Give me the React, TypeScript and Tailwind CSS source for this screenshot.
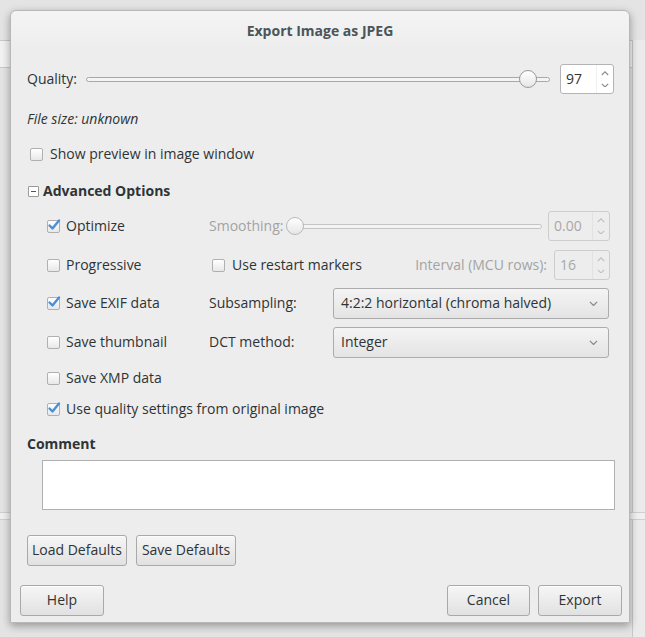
import React from 'react';

const font = { fontFamily: '"Open Sans", "Noto Sans", sans-serif' };

// Open Sans sits a little low next to GTK's font, lift labels by a pixel
function T({ children, className = '' }: { children: React.ReactNode; className?: string }) {
  return <span className={`pb-[2px] ${className}`}>{children}</span>;
}

function Check({ on }: { on?: boolean }) {
  return (
    <span className="relative inline-block w-[13px] h-[13px] shrink-0 rounded-[2px] border border-[#b0b0b0] bg-gradient-to-b from-white to-[#e8e8e8]">
      {on && (
        <svg viewBox="0 0 14 14" className="absolute -top-[3px] -right-[2px] w-[14px] h-[14px]">
          <path d="M2.5 7.5 L5.5 10.5 L12 2.5" fill="none" stroke="#4a90d9" strokeWidth="2.4" strokeLinecap="round" strokeLinejoin="round" />
        </svg>
      )}
    </span>
  );
}

function Chevron({ up, color = '#8a8a8a', size = 8 }: { up?: boolean; color?: string; size?: number }) {
  return (
    <svg viewBox="0 0 10 6" width={size} height={size * 0.6}>
      <path d={up ? 'M1 5 L5 1 L9 5' : 'M1 1 L5 5 L9 1'} fill="none" stroke={color} strokeWidth="1.4" />
    </svg>
  );
}

function Spin({ value, w, disabled }: { value: string; w: string; disabled?: boolean }) {
  return (
    <div className={`flex h-full ${w} rounded-[3px] border ${disabled ? 'border-[#cdcdcd] bg-[#ededed] text-[#a8a8a8]' : 'border-[#b4b4b4] bg-white text-[#2e3436]'}`}>
      <div className="flex-1 flex items-center pl-[5px]"><T>{value}</T></div>
      <div className={`w-[17px] flex flex-col items-center justify-center gap-[7px] border-l ${disabled ? 'border-[#e2e2e2]' : 'border-[#f0f0f0]'}`}>
        <Chevron up color={disabled ? '#c0c0c0' : '#8a8a8a'} />
        <Chevron color={disabled ? '#c0c0c0' : '#8a8a8a'} />
      </div>
    </div>
  );
}

function Slider({ pos, disabled }: { pos: string; disabled?: boolean }) {
  return (
    <div className="relative flex-1 h-[18px] flex items-center">
      <div className={`w-full h-[5px] rounded-full border ${disabled ? 'border-[#c4c4c4]' : 'border-[#a8a8a8]'} bg-[#f4f4f4]`} />
      <div
        className={`absolute top-0 w-[18px] h-[18px] -ml-[9px] rounded-full border ${disabled ? 'border-[#b8b8b8]' : 'border-[#9a9a9a]'} bg-gradient-to-b from-white to-[#e6e6e6]`}
        style={{ left: pos }}
      />
    </div>
  );
}

function Combo({ text }: { text: string }) {
  return (
    <div className="flex items-center h-full w-[276px] rounded-[3px] border border-[#acacac] bg-gradient-to-b from-[#f4f4f4] to-[#e4e4e4] pl-[7px] pr-[10px]">
      <T className="flex-1">{text}</T>
      <Chevron size={9} />
    </div>
  );
}

function Btn({ children, w }: { children: React.ReactNode; w: string }) {
  return (
    <button className={`h-full ${w} pb-[2px] rounded-[3px] border border-[#a9a9a9] bg-gradient-to-b from-[#f6f6f6] to-[#e1e1e1] text-[#2e3436] shadow-[0_1px_0_rgba(255,255,255,0.8)_inset]`}>
      {children}
    </button>
  );
}

export default function App() {
  return (
    <div className="relative w-[645px] h-[637px] overflow-hidden bg-[#e4e4e4] text-[14px] text-[#2e3436]" style={font}>
      {/* window behind the dialog */}
      <div className="absolute left-0 top-[40px] w-[645px] h-[28px] border-y border-[#c8c8c8] bg-[#f2f2f2]" />
      <div className="absolute left-[632px] top-[40px] w-[13px] h-[597px] border-l border-[#c8c8c8] bg-[#ebebeb]" />
      <div className="absolute left-0 top-[512px] w-[645px] h-[8px] border-y border-[#cfcfcf] bg-[#f0f0f0]" />

      {/* dialog */}
      <div className="absolute left-[10px] top-[10px] w-[620px] h-[613px] rounded-t-[6px] bg-[#ededed] border border-[#b8b8b8] shadow-[0_3px_8px_rgba(0,0,0,0.35)] flex flex-col">
        <div className="h-[40px] shrink-0 flex items-center justify-center rounded-t-[6px] bg-gradient-to-b from-[#f4f4f4] to-[#ededed] font-bold text-[#4b5559]">
          <T>Export Image as JPEG</T>
        </div>

        <div className="mt-[13px] h-[30px] flex items-center pl-[16px] pr-[15px]">
          <T className="w-[59px]">Quality:</T>
          <Slider pos="95.3%" />
          <div className="ml-[10px] h-full"><Spin value="97" w="w-[54px]" /></div>
        </div>

        <div className="mt-[16px] h-[18px] flex items-center pl-[16px] italic"><T>File size: unknown</T></div>

        <div className="mt-[17px] h-[18px] flex items-center pl-[19px]">
          <Check />
          <T className="ml-[7px]">Show preview in image window</T>
        </div>

        <div className="mt-[19px] h-[18px] flex items-center pl-[17px] font-bold">
          <span className="w-[11px] h-[11px] border border-[#9a9a9a] rounded-[1px] bg-white flex items-center justify-center">
            <span className="w-[5px] h-px bg-[#555]" />
          </span>
          <T className="ml-[4px]">Advanced Options</T>
        </div>

        <div className="mt-[11px] h-[30px] flex items-center pl-[36px] pr-[19px]">
          <div className="w-[162px] flex items-center"><Check on /><T className="ml-[6px]">Optimize</T></div>
          <T className="w-[80px] text-[#a3a3a3]">Smoothing:</T>
          <Slider pos="2.5%" disabled />
          <div className="ml-[6px] h-full"><Spin value="0.00" w="w-[62px]" disabled /></div>
        </div>

        <div className="mt-[9px] h-[30px] flex items-center pl-[36px] pr-[19px]">
          <div className="w-[165px] flex items-center"><Check /><T className="ml-[6px]">Progressive</T></div>
          <Check />
          <T className="ml-[7px] flex-1">Use restart markers</T>
          <T className="text-[#a3a3a3]">Interval (MCU rows):</T>
          <div className="ml-[7px] h-full"><Spin value="16" w="w-[56px]" disabled /></div>
        </div>

        <div className="mt-[8px] h-[31px] flex items-center pl-[36px]">
          <div className="w-[162px] flex items-center"><Check on /><T className="ml-[6px]">Save EXIF data</T></div>
          <T className="w-[124px]">Subsampling:</T>
          <Combo text="4:2:2 horizontal (chroma halved)" />
        </div>

        <div className="mt-[8px] h-[31px] flex items-center pl-[36px]">
          <div className="w-[162px] flex items-center"><Check /><T className="ml-[6px]">Save thumbnail</T></div>
          <T className="w-[124px]">DCT method:</T>
          <Combo text="Integer" />
        </div>

        <div className="mt-[8px] h-[24px] flex items-center pl-[36px]">
          <Check /><T className="ml-[6px]">Save XMP data</T>
        </div>

        <div className="mt-[7px] h-[24px] flex items-center pl-[36px]">
          <Check on /><T className="ml-[6px]">Use quality settings from original image</T>
        </div>

        <div className="mt-[14px] h-[18px] flex items-center pl-[16px] font-bold"><T>Comment</T></div>

        <div className="mt-[7px] h-[50px] ml-[31px] mr-[14px] bg-white border border-[#b0b0b0]" />

        <div className="mt-[25px] h-[31px] flex gap-[9px] pl-[16px]">
          <Btn w="w-[100px]">Load Defaults</Btn>
          <Btn w="w-[100px]">Save Defaults</Btn>
        </div>

        <div className="mt-[19px] h-[31px] flex pl-[9px] pr-[7px]">
          <Btn w="w-[84px]">Help</Btn>
          <div className="flex-1" />
          <Btn w="w-[83px]">Cancel</Btn>
          <div className="w-[8px]" />
          <Btn w="w-[84px]">Export</Btn>
        </div>
      </div>
    </div>
  );
}
